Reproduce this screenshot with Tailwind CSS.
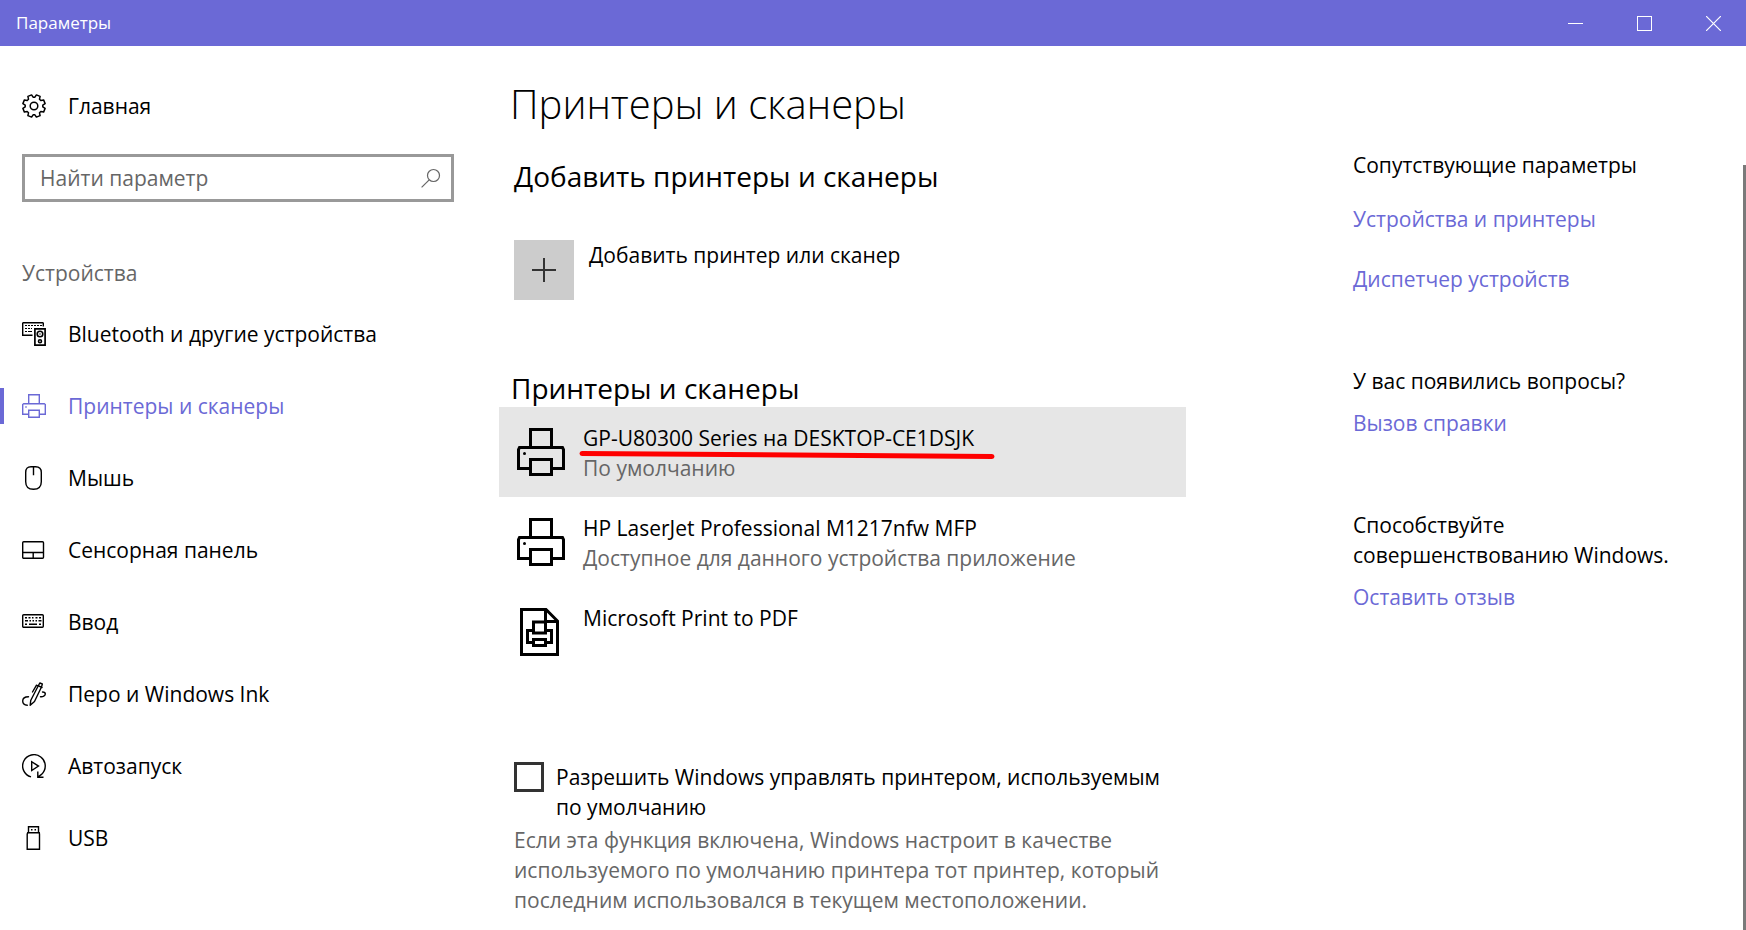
<!DOCTYPE html>
<html lang="ru">
<head>
    <meta charset="UTF-8">
    <meta name="viewport" content="width=device-width, initial-scale=1.0">
    <title>Параметры</title>
    <script src="https://cdn.jsdelivr.net/npm/@tailwindcss/browser@4"></script>
</head>
<body class="flex h-screen flex-col overflow-hidden bg-white font-['Open_Sans','Noto_Sans',sans-serif] text-[21px] leading-[30px] text-black">

    <!-- Заголовок окна -->
    <header class="flex h-[46px] shrink-0 items-center justify-between bg-[#6b69d6] text-white">
        <span class="pl-4 text-[17px]">Параметры</span>
        <div class="-mr-0.5 flex h-full">
            <button type="button" aria-label="Свернуть" class="flex w-[69px] items-center justify-center">
                <svg class="size-[15px]" viewBox="0 0 15 15" fill="none" stroke="currentColor" shape-rendering="crispEdges"><path d="M0 7.500h15"/></svg>
            </button>
            <button type="button" aria-label="Развернуть" class="flex w-[69px] items-center justify-center">
                <svg class="size-[15px]" viewBox="0 0 15 15" fill="none" stroke="currentColor" shape-rendering="crispEdges"><path d="M.5 .5h14v14h-14z"/></svg>
            </button>
            <button type="button" aria-label="Закрыть" class="flex w-[69px] items-center justify-center">
                <svg class="size-[15px]" viewBox="0 0 15 15" fill="none" stroke="currentColor" stroke-width="1.200"><path d="M0 0l15 15M15 0L0 15"/></svg>
            </button>
        </div>
    </header>

    <div class="flex min-h-0 flex-1">

        <!-- Боковое меню -->
        <aside class="w-[476px] shrink-0 pt-[45px]">
            <a href="#" class="flex items-center gap-[22px] px-[22px]">
                <svg class="size-6" viewBox="0 0 24 24" fill="none" stroke="currentColor" stroke-width="1.500" stroke-linejoin="round"><path d="M12.900 3.200 14.400 .9 18.100 2.400 17.500 5.200 18.800 6.500 21.600 5.900 23.100 9.600 20.800 11.100V12.900L23.100 14.400 21.600 18.100 18.800 17.500 17.500 18.800 18.100 21.600 14.400 23.100 12.900 20.800H11.100L9.600 23.100 5.900 21.600 6.500 18.800 5.200 17.500 2.400 18.100 .9 14.400 3.200 12.900V11.100L.9 9.600 2.400 5.900 5.200 6.500 6.500 5.200 5.900 2.400 9.600 .9 11.100 3.200z"/><circle cx="12" cy="12" r="3.800"/></svg>
                <span>Главная</span>
            </a>

            <form class="mx-[22px] mt-[33px] flex h-12 items-center border-3 border-[#999] pr-2.5 pl-[15px]">
                <input type="search" aria-label="Найти параметр" placeholder="Найти параметр" class="min-w-0 flex-1 outline-none placeholder:text-[#666]">
                <button type="submit" aria-label="Поиск">
                    <svg class="size-5" viewBox="0 0 20 20" fill="none" stroke="#666" stroke-width="1.200"><circle cx="12.500" cy="7.500" r="6"/><path d="M8.200 11.800.6 19.400"/></svg>
                </button>
            </form>

            <h2 class="mt-14 px-[22px] text-[#666]">Устройства</h2>

            <nav class="mt-2.5">
                <a href="#" class="flex h-[72px] items-center gap-[22px] px-[22px]">
                    <svg class="size-6" viewBox="0 0 24 24" shape-rendering="crispEdges">
                        <path fill="none" stroke="currentColor" stroke-width="1.400" shape-rendering="auto" d="M10.500 13.300H.7V1.200L1.200 .7h19.600l.5.500V4.500"/>
                        <path fill="none" stroke="currentColor" stroke-width="1.700" shape-rendering="auto" d="M12.900 6.900h10.200v16.200H12.900z"/>
                        <path fill="currentColor" d="M3 3h2v1H3zM6 3h2v1H6zM9 3h2v1H9zM12 3h2v1h-2zM15 3h2v1h-2zM18 3h2v1h-2zM3 6h2v1H3zM6 6h2v1H6zM9 6h1v1H9zM3 9h2v1H3zM6 9h4v1H6z"/>
                        <g fill="none" stroke="currentColor" stroke-width="1.600" shape-rendering="auto"><circle cx="18" cy="12" r="2.800"/><circle cx="18" cy="19.200" r="1.500"/><path d="M17.500 12h1"/></g>
                    </svg>
                    <span>Bluetooth и другие устройства</span>
                </a>
                <a href="#" aria-current="page" class="relative flex h-[72px] items-center gap-[22px] px-[22px] text-[#6b69d6] before:absolute before:left-0 before:h-9 before:w-1 before:bg-[#6b69d6]">
                    <svg class="size-6" viewBox="0 0 24 24" fill="none" stroke="currentColor" stroke-width="1.400"><path d="M6.700 9.500V.7h10.600v8.800M6.500 20.300H.7V10.500l1-.8h20.600l1 .8v9.800h-5.800M6.700 16.200h10.600v7.100H6.700z"/><path d="M3.300 13h1.400"/></svg>
                    <span>Принтеры и сканеры</span>
                </a>
                <a href="#" class="flex h-[72px] items-center gap-[22px] px-[22px]">
                    <svg class="size-6" viewBox="0 0 24 24" fill="none" stroke="currentColor" stroke-width="1.400"><path d="M3.700 6.500Q3.700 .7 9 .7h4.600q5.700 0 5.700 5.800v9.300q0 7.500-7.800 7.500t-7.800-7.500zM11.500 .7v8.500"/></svg>
                    <span>Мышь</span>
                </a>
                <a href="#" class="flex h-[72px] items-center gap-[22px] px-[22px]">
                    <svg class="size-6" viewBox="0 0 24 24" fill="none" stroke="currentColor" stroke-width="1.400"><rect x=".7" y="3.700" width="20.800" height="16.600" rx="1"/><path d="M.7 14.500h20.800M11.200 14.500v5.800"/></svg>
                    <span>Сенсорная панель</span>
                </a>
                <a href="#" class="flex h-[72px] items-center gap-[22px] px-[22px]">
                    <svg class="size-6" viewBox="0 0 24 24"><rect x=".7" y="4.700" width="20.600" height="12.600" rx="1" fill="none" stroke="currentColor" stroke-width="1.400"/><path fill="currentColor" d="M3 7h2v1.500H3zM6.500 7h2v1.500h-2zM10 7h1.500v1.500H10zM13.500 7h2v1.500h-2zM17 7h2v1.500h-2zM3 10h3v1.500H3zM7.500 10H9v1.500H7.500zM10.500 10H12v1.500h-1.500zM13.500 10H15v1.500h-1.500zM16.500 10h3v1.500h-3zM3 13.500h2V15H3zM7 13.500h8V15H7zM17 13.500h2V15h-2z"/></svg>
                    <span>Ввод</span>
                </a>
                <a href="#" class="flex h-[72px] items-center gap-[22px] px-[22px]">
                    <svg class="size-6" viewBox="0 0 24 24" fill="none" stroke="currentColor" stroke-width="1.400" stroke-linecap="round" stroke-linejoin="round"><path d="M8.200 23.200 8.800 18.200 16.300 3.800 17.800 1 20.300 2 19.600 4.800 12.500 19.500zM16 3.700l4 1.800M10.500 10 14.500 3.200 16 4M5.300 23.200C2.300 23 .7 21.500 .7 19s2-4.200 5.800-4.200M20.500 10q2.800 0 2.800 2.100c0 1.600-2.500 3-4.800 2.600"/></svg>
                    <span>Перо и Windows Ink</span>
                </a>
                <a href="#" class="flex h-[72px] items-center gap-[22px] px-[22px]">
                    <svg class="size-6" viewBox="0 0 24 24" fill="none" stroke="currentColor" stroke-width="1.400"><path d="M9 22.900A11.300 11.300 0 1 1 19.500 20.400L16 23M9.700 7.700v8.800l6.800-4.400zM15.800 17.500v5.800h5.700"/></svg>
                    <span>Автозапуск</span>
                </a>
                <a href="#" class="flex h-[72px] items-center gap-[22px] px-[22px]">
                    <svg class="size-6" viewBox="0 0 24 24" fill="none" stroke="currentColor" stroke-width="1.400"><path d="M6.500 6.500V.7h10v5.800M5.700 6.700h11.600l.2 1.500v15.100H5.200V8.200z"/><path d="M9 3.700h1.500M12.500 3.700H14"/></svg>
                    <span>USB</span>
                </a>
            </nav>
        </aside>

        <!-- Основная область -->
        <main class="flex min-w-0 flex-1">
            <div class="w-[710px] shrink-0 pt-[30px] pl-[23px]">
                <h1 class="pl-[11px] text-[40px] leading-[56px] font-light">Принтеры и сканеры</h1>
                <h2 class="mt-[26px] pl-[15px] text-[28px] leading-9">Добавить принтеры и сканеры</h2>

                <button type="button" class="mt-[46px] ml-[15px] flex items-start gap-[15px] text-left">
                    <span class="flex size-[60px] items-center justify-center bg-[#ccc]">
                        <svg class="size-6" viewBox="0 0 24 24" fill="none" stroke="#333" stroke-width="2"><path d="M0 12h24M12 0v24"/></svg>
                    </span>
                    <span>Добавить принтер или сканер</span>
                </button>

                <h2 class="mt-[70px] mb-px pl-3 text-[28px] leading-9">Принтеры и сканеры</h2>
                <ul>
                    <li class="flex h-[90px] items-start gap-[18px] bg-[#e6e6e6] pt-4 pl-[18px]">
                        <svg class="mt-[5px] size-12 shrink-0" viewBox="0 0 48 48" fill="none" stroke="currentColor" stroke-width="3"><path d="M13.500 19V1.500h21V19M13 40.500H1.500v-19l1-2h43l1 2v19H35M13.500 31.500h21v15h-21z"/><circle cx="7.500" cy="25.500" r="1.500" fill="currentColor" stroke="none"/></svg>
                        <div class="relative">
                            <p>GP-U80300 Series на DESKTOP-CE1DSJK</p>
                            <p class="text-[#666]">По умолчанию</p>
                            <svg class="absolute top-7 -left-1 h-2.5 w-[416px]" viewBox="0 0 416 10" fill="none" stroke="#f00" stroke-width="5" stroke-linecap="round"><path d="M3 2.500 413 5.500"/></svg>
                        </div>
                    </li>
                    <li class="flex h-[90px] items-start gap-[18px] pt-4 pl-[18px]">
                        <svg class="mt-[5px] size-12 shrink-0" viewBox="0 0 48 48" fill="none" stroke="currentColor" stroke-width="3"><path d="M13.500 19V1.500h21V19M13 40.500H1.500v-19l1-2h43l1 2v19H35M13.500 31.500h21v15h-21z"/><circle cx="7.500" cy="25.500" r="1.500" fill="currentColor" stroke="none"/></svg>
                        <div>
                            <p>HP LaserJet Professional M1217nfw MFP</p>
                            <p class="text-[#666]">Доступное для данного устройства приложение</p>
                        </div>
                    </li>
                    <li class="flex h-[90px] items-start gap-[18px] pt-4 pl-[18px]">
                        <svg class="mt-[5px] size-12 shrink-0" viewBox="0 0 48 48" fill="none" stroke="currentColor" stroke-width="3"><path d="M4.500 1.500H29L40.500 13v33.500h-36zM28.500 1.500v12h12M16.500 23.500v-9.500h12v11h-12zM16 34.500h-5.500v-12h6M28.500 22.500h6v12H29M16.500 31.500h12v6h-12z"/></svg>
                        <p>Microsoft Print to PDF</p>
                    </li>
                </ul>

                <div class="mt-[85px] flex items-start gap-3 pl-[15px]">
                    <input type="checkbox" id="defaultPrinter" class="size-[30px] shrink-0 appearance-none border-3 border-[#333]">
                    <label for="defaultPrinter">Разрешить Windows управлять принтером, используемым<br>по умолчанию</label>
                </div>
                <p class="mt-[3px] pl-[15px] text-[#666]">Если эта функция включена, Windows настроит в качестве<br>используемого по умолчанию принтера тот принтер, который<br>последним использовался в текущем местоположении.</p>
            </div>

            <!-- Ссылки справа -->
            <aside class="min-w-0 flex-1 pt-[104px] pl-[167px]">
                <h3>Сопутствующие параметры</h3>
                <a href="#" class="mt-6 block text-[#6b69d6]">Устройства и принтеры</a>
                <a href="#" class="mt-[30px] block text-[#6b69d6]">Диспетчер устройств</a>
                <h3 class="mt-[72px]">У вас появились вопросы?</h3>
                <a href="#" class="mt-3 block text-[#6b69d6]">Вызов справки</a>
                <h3 class="mt-[72px]">Способствуйте<br>совершенствованию Windows.</h3>
                <a href="#" class="mt-3 block text-[#6b69d6]">Оставить отзыв</a>
            </aside>
        </main>

        <!-- Полоса прокрутки -->
        <div class="mt-[119px] w-[3px] shrink-0 bg-[#7a7a7a]"></div>
    </div>
</body>
</html>
